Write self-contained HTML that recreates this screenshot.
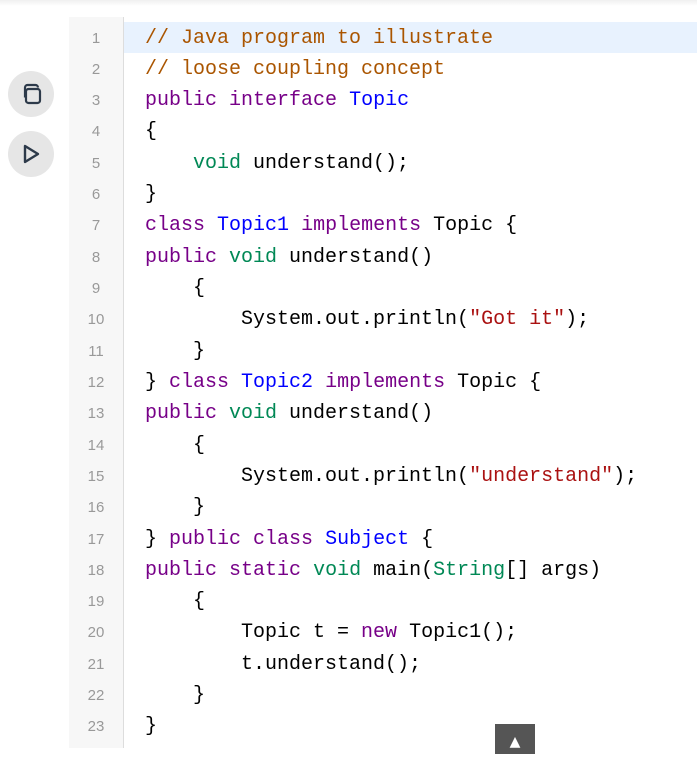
<!DOCTYPE html><html><head><style>
body{margin:0;width:697px;height:754px;background:#fff;overflow:hidden;position:relative;font-family:"Liberation Mono",monospace}
.top{position:absolute;left:0;top:0;width:697px;height:6px;background:linear-gradient(#f0f0f0,#fff)}
.gut{position:absolute;left:69px;top:17px;width:54px;height:731px;background:#f7f7f7;border-right:1px solid #ddd}
.hl{position:absolute;left:124px;top:22px;width:573px;height:31px;background:#e8f2fe}
.nums{position:absolute;left:69px;top:22.5px;width:54px;text-align:center;font-family:"Liberation Sans",sans-serif;font-size:15px;color:#999;line-height:31.32px}
pre{position:absolute;left:145px;top:22.5px;margin:0;font-size:20px;line-height:31.32px;color:#000;font-family:"Liberation Mono",monospace}
.c{color:#aa5500}.k{color:#770088}.d{color:#0000ff}.t{color:#008855}.s{color:#aa1111}
.btn{position:absolute;left:8px;width:46px;height:46px;border-radius:50%;background:#e6e6e6}
.up{position:absolute;left:495px;top:724px;width:40px;height:30px;background:#555;color:#fff;text-align:center;font-size:14px;line-height:36px;font-family:"DejaVu Sans",sans-serif}
</style></head><body>
<div class="top"></div>
<div class="btn" style="top:71px"><svg width="46" height="46" viewBox="0 0 46 46" fill="none" stroke="#2d3a4a" stroke-width="2.2"><path d="M17 26.5V16.5A2.5 2.5 0 0 1 19.5 14h8A2.5 2.5 0 0 1 30 16.5"/><rect x="18" y="18" width="14" height="14" rx="2.5" fill="#e6e6e6"/></svg></div>
<div class="btn" style="top:131px"><svg width="46" height="46" viewBox="0 0 46 46" fill="none" stroke="#2d3a4a" stroke-width="2.4" stroke-linejoin="round"><path d="M17 15v16l13-8z"/></svg></div>
<div class="gut"></div>
<div class="hl"></div>
<div class="nums">1<br>2<br>3<br>4<br>5<br>6<br>7<br>8<br>9<br>10<br>11<br>12<br>13<br>14<br>15<br>16<br>17<br>18<br>19<br>20<br>21<br>22<br>23</div>
<pre><span class="c">// Java program to illustrate</span>
<span class="c">// loose coupling concept</span>
<span class="k">public</span> <span class="k">interface</span> <span class="d">Topic</span>
{
    <span class="t">void</span> understand();
}
<span class="k">class</span> <span class="d">Topic1</span> <span class="k">implements</span> Topic {
<span class="k">public</span> <span class="t">void</span> understand()
    {
        System.out.println(<span class="s">"Got it"</span>);
    }
} <span class="k">class</span> <span class="d">Topic2</span> <span class="k">implements</span> Topic {
<span class="k">public</span> <span class="t">void</span> understand()
    {
        System.out.println(<span class="s">"understand"</span>);
    }
} <span class="k">public</span> <span class="k">class</span> <span class="d">Subject</span> {
<span class="k">public</span> <span class="k">static</span> <span class="t">void</span> main(<span class="t">String</span>[] args)
    {
        Topic t = <span class="k">new</span> Topic1();
        t.understand();
    }
}</pre>
<div class="up">▲</div>
</body></html>
